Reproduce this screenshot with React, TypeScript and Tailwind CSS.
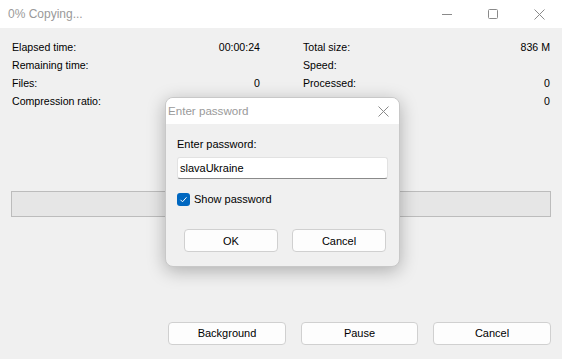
import React from "react"

const font = { fontFamily: '"Segoe UI", "Liberation Sans", Arial, sans-serif' }

const Row = ({ label, value }: { label: string; value?: string }) => (
  <div className="flex h-[18px] items-center justify-between">
    <span>{label}</span>
    <span>{value}</span>
  </div>
)

const WinButton = ({ children, className = "" }: { children: React.ReactNode; className?: string }) => (
  <button
    className={`h-[23px] rounded-[4px] border border-[#d0d0d0] bg-[#fdfdfd] text-[11px] text-black ${className}`}
  >
    {children}
  </button>
)

export default function App() {
  return (
    <div className="relative h-[359px] w-[562px] overflow-hidden bg-[#f0f0f0] text-[10.6px] text-black" style={font}>
      {/* title bar */}
      <div className="flex h-[28px] items-center justify-between bg-white">
        <span className="pl-[8px] text-[12px] text-[#9a9a9a]">0% Copying...</span>
        <div className="flex h-full items-center text-[#8a8a8a]">
          <div className="flex h-full w-[46px] items-center justify-center">
            <svg width="10" height="10" viewBox="0 0 10 10">
              <path d="M0 5.5h10" stroke="currentColor" strokeWidth="1" />
            </svg>
          </div>
          <div className="flex h-full w-[46px] items-center justify-center">
            <svg width="10" height="10" viewBox="0 0 10 10">
              <rect x="0.5" y="0.5" width="9" height="9" rx="1" fill="none" stroke="currentColor" />
            </svg>
          </div>
          <div className="flex h-full w-[46px] items-center justify-center">
            <svg width="11" height="11" viewBox="0 0 11 11">
              <path d="M0.5 0.5l10 10M10.5 0.5l-10 10" stroke="currentColor" strokeWidth="1" />
            </svg>
          </div>
        </div>
      </div>

      {/* stats */}
      <div className="grid grid-cols-2 gap-x-[42px] px-[12px] pt-[11px]">
        <div>
          <Row label="Elapsed time:" value="00:00:24" />
          <Row label="Remaining time:" />
          <Row label="Files:" value="0" />
          <Row label="Compression ratio:" />
        </div>
        <div className="pl-[1px]">
          <Row label="Total size:" value="836 M" />
          <Row label="Speed:" />
          <Row label="Processed:" value="0" />
          <Row label="Compressed size:" value="0" />
        </div>
      </div>

      {/* progress */}
      <div className="mx-[11px] mt-[80px] h-[26px] border border-[#bcbcbc] bg-[#e6e6e6]" />

      {/* bottom buttons */}
      <div className="mt-[105px] flex justify-end gap-[15px] pr-[11px]">
        <WinButton className="w-[118px]">Background</WinButton>
        <WinButton className="w-[117px]">Pause</WinButton>
        <WinButton className="w-[118px]">Cancel</WinButton>
      </div>

      {/* password dialog */}
      <div className="absolute left-[165px] top-[97px] w-[235px] overflow-hidden rounded-[8px] border border-[#c8c8c8] bg-[#f0f0f0] shadow-[0_4px_18px_rgba(0,0,0,0.28)]">
        <div className="flex h-[26px] items-center justify-between bg-white pl-[2px] pr-[10px]">
          <span className="text-[11.6px] text-[#9a9a9a]">Enter password</span>
          <svg width="11" height="11" viewBox="0 0 11 11" className="text-[#8a8a8a]">
            <path d="M0.5 0.5l10 10M10.5 0.5l-10 10" stroke="currentColor" strokeWidth="1" />
          </svg>
        </div>
        <div className="px-[11px] pb-[14px] pt-[12px] text-[11px] leading-[16px]">
          <div>Enter password:</div>
          <div className="mt-[5px] flex h-[22px] items-center rounded-[3px] border border-[#e2e2e2] border-b-[#8a8a8a] bg-white px-[2px]">
            slavaUkraine
          </div>
          <label className="mt-[12px] flex h-[16px] items-center gap-[4px]">
            <span className="flex h-[13px] w-[13px] items-center justify-center rounded-[3px] bg-[#0067c0]">
              <svg width="9" height="9" viewBox="0 0 9 9">
                <path d="M1.5 4.8l2 2 4-4.5" fill="none" stroke="white" strokeWidth="1" />
              </svg>
            </span>
            Show password
          </label>
          <div className="mt-[22px] flex justify-between pl-[7px] pr-[2px]">
            <WinButton className="w-[94px]">OK</WinButton>
            <WinButton className="w-[94px]">Cancel</WinButton>
          </div>
        </div>
      </div>
    </div>
  )
}
